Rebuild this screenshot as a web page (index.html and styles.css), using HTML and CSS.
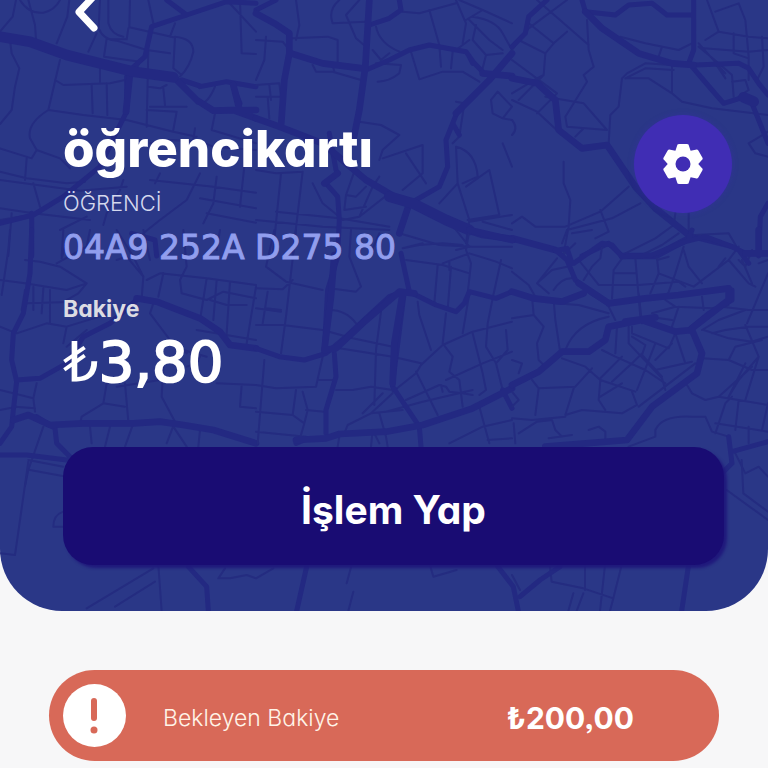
FILE: index.html
```html
<!DOCTYPE html>
<html lang="tr">
<head>
<meta charset="utf-8">
<meta name="viewport" content="width=device-width, initial-scale=1">
<title>öğrencikartı</title>
<link rel="stylesheet" href="styles.css">
</head>
<body>
<header class="card">
  <svg class="map" viewBox="0 0 768 611" preserveAspectRatio="xMidYMin slice" aria-hidden="true">
    <!-- North west -->
    <g transform="scale(.33333)">
      <path class="street" d="M48 0L38 50L0 95M85 0L105 75L108 118M60 0Q85 42 130 38Q165 30 180 0M208 0L202 50L170 130M300 0L296 85Q310 120 350 122L440 150L510 160M325 0L325 70Q335 105 370 110M390 0L388 82L520 112M320 115L312 170L420 185M290 100L265 155M385 85L380 118L330 118M445 0L460 70M525 110L520 205L545 225M525 110Q580 115 580 155Q570 200 540 230M445 150L440 380M420 185L410 205M720 0L725 160L768 162M680 0L768 95M30 120L35 160L58 205L45 260L35 330L0 372M180 180L145 330L250 345L380 360L520 395L590 410M165 240L190 255L330 250L375 240M300 190L300 245M275 255L278 340M320 250L322 345M145 330Q80 370 90 415L110 450L95 475L0 445M110 450L180 475L210 505M80 475L75 540M0 515L80 535L200 550L255 545M0 540L240 572L380 560M0 625L100 640L270 660M0 660L90 645M35 640L25 768M100 550L120 620M370 540L360 570L320 640L310 675M480 520L465 550M450 430L510 420L600 425L640 440L768 450M450 320L520 320L560 320M490 265L495 315M445 260L480 265L500 255M440 330L530 335M530 335L520 390M590 310Q620 320 645 260M645 340L635 390L768 430M585 385L580 420M600 520L560 600L480 660L430 700M650 530L640 610L610 670M450 540L640 560L768 578M600 595L768 625M620 640L768 668M735 480L720 620M180 690L260 650M185 768L190 690M510 110L525 70"/>
      <path class="road" d="M470 768L465 720L395 700M390 210L435 170L455 80L560 45L680 5L768 10M500 0L560 45M380 230L380 335L350 395M0 670L100 645L190 590L300 500L350 395M95 640L95 768M600 260L680 245L768 260M700 260L720 310M545 240L600 258"/>
      <path class="avenue" d="M390 220L378 335M650 332L768 330M700 255L720 335M520 230L590 300L640 332L700 330L768 355"/>
      <path class="highway" d="M0 110L90 125L200 165L300 190L400 215L520 232"/>
    </g>
    <!-- North -->
    <g transform="translate(256 0) scale(.33333)">
      <path class="street" d="M120 0L130 75L120 120M250 0Q215 30 230 70L330 65M310 0L270 45L300 115L330 140M105 115L215 110L245 120L245 190M30 110L25 180L0 240M0 120L80 125L100 150M170 195L180 215L230 215L315 240M230 195L235 215M350 150L375 180L400 160M360 80Q370 130 430 155M360 190L435 195L430 220Q400 245 365 245M440 35L490 40L600 10M520 30L550 135L555 200M465 155L490 238L560 215L620 215L670 245M590 155L585 205M600 0L630 70L620 130M640 60L700 120L740 150M650 50Q720 60 740 100L768 150M660 75L650 120L690 165L680 205M640 120L600 150M690 165L740 160M610 0L680 30L768 70M680 30L630 60M0 255L70 250L75 290L0 290M35 290L40 355M40 255L45 300M310 365L375 375L430 405L380 450L370 480M380 475L500 435L500 520L440 570M450 460L510 550M300 500L270 585L300 590L330 560M370 530L350 560L310 650L260 660M400 580L310 650M600 305L625 310L610 410L590 430M600 440Q660 455 665 530L620 550M630 560L700 510L730 645L635 660M600 440L605 550L550 610M605 550L640 660L630 730M740 430L768 500M705 300L725 275L768 320L740 355L710 340ZM740 355L768 360M0 510L60 520L140 515M75 520L50 768M140 515L110 768M170 550L200 610L250 650M270 585L265 630L330 620M60 635L250 655L400 680M0 660L200 680L400 690M640 665L768 645M680 665L768 690M430 700L550 735L650 740L768 740M370 700L340 768"/>
      <path class="road" d="M340 75L400 55L435 30L430 0M330 210L400 180L460 150L520 135L630 155L655 190L680 215M600 345L570 420L575 500L550 560L480 600M220 400L240 510M210 550L245 590L250 660L245 768M590 370L610 405M0 30L60 0M650 190L640 170"/>
      <path class="avenue" d="M0 40L55 70L100 100L100 160L85 240L75 380M105 160L200 190L320 205M340 0L328 200L310 330L290 430M430 700L460 610M768 160L700 240L600 340M0 355L70 380L200 430L330 540L450 610M205 550L245 520M680 220L768 228M600 680L680 705L775 718"/>
      <path class="highway" d="M400 590L470 610L570 660L640 690"/>
    </g>
    <!-- North east -->
    <g transform="translate(512 0) scale(.33333)">
      <path class="street" d="M75 0L230 135M165 0L50 85L0 150M50 70L125 130L165 95M125 130L100 160L95 225L20 300M20 120L100 160M0 180L135 280L75 340M0 280L75 235L95 225M75 240L105 285M225 60L230 150L245 200L215 225L225 245L160 350L165 380L285 390L215 310L100 290M0 300L75 335L150 405M190 410L215 385M330 235L345 220L400 190L480 195M330 235L320 320L295 345L290 430M340 235L400 205L485 210M345 235L410 235L480 280L510 305L600 325L768 345M480 195L480 280M325 110L400 130L500 150L540 130M450 140L440 170M585 0L620 95L580 120M610 35L680 10L700 60L710 170L710 240M620 95L710 110L768 115M665 100L665 160L710 175M575 145L710 155L768 150M750 110L755 200L735 240M560 140L620 190L660 225L665 290M610 190L640 235L620 200M660 245L700 240L710 270M710 270L680 290M768 395L710 430L730 460L768 470M155 485L155 550L175 600L170 680L155 760M0 670L30 650L70 680L160 680L265 635L350 560M265 630L290 695L250 715M165 690L300 655L385 610M490 640L485 675L430 715L340 760M530 640L530 700M0 360Q20 385 0 405M550 705L650 700L690 768M150 768L190 730M560 130L640 220"/>
      <path class="road" d="M0 140L40 100L50 50L105 0M210 0L220 35L310 45L350 15L420 10L465 45L545 45M545 0L545 150L530 190M540 200L600 270L635 310L700 290M550 195L680 190L710 205L740 250L768 285M720 310L768 430M768 610L745 650L740 768M210 768L290 730L330 768M540 710L660 740"/>
      <path class="avenue" d="M0 235L75 250L130 300L140 390L210 445L285 435L370 560L430 625L530 705M220 35L270 85L380 160L480 190L545 195M0 715L130 750M330 768L430 768L540 710"/>
      <path class="highway" d="M695 292L725 305"/>
    </g>
    <!-- West -->
    <g transform="translate(0 230) scale(.33333)">
      <path class="street" d="M30 0L25 60L5 195M0 150L75 160L200 180L260 160L180 110L120 95L75 90M185 85L200 30M260 160L235 190L200 210M75 180L65 240M100 170L100 240M130 175L125 250M150 180L150 240M80 220L230 215M0 290L50 310L140 280L200 290L330 250M200 290L190 340M260 300L200 350M400 80L430 140L425 205M440 150L480 130L620 145L768 165M490 130L475 200M430 140L380 80L350 90M540 150L545 190L620 210L670 185L768 205M620 145L600 270M650 150L640 270M690 155L680 310M768 170L740 340M630 210L680 225L740 225M460 220L450 250L510 330L560 370M590 300L768 330M600 380L590 400L560 410M550 360L620 380M0 480L100 505L110 460M100 505L105 545M45 530L105 535M320 460L310 520L245 560L240 580M375 460L385 575M310 520L375 530M490 410L485 500L525 575L500 640M270 590L275 640M330 590L315 650M400 580L375 650M600 600L595 650M520 590L560 650M650 460L768 465M725 465L720 530L768 535M130 590L85 720L75 768M85 690L190 710M90 720L200 740M350 470L480 450M150 280L150 230M0 540L50 530M550 0L560 110L540 150M660 0L650 60M430 0L450 90M350 0L400 80M270 0L260 50L170 100"/>
      <path class="road" d="M95 0L90 130L70 250L40 310L35 390L50 455L40 540L35 590L0 640M50 450L120 445L200 400L250 320L330 280L410 210M110 560L165 595L170 640L210 680M0 675L80 675L200 690"/>
      <path class="avenue" d="M410 205L470 215L600 265L660 305L690 345L768 355M40 570L85 555L150 585L250 580L400 580L480 575L550 585L640 600L768 640"/>
    </g>
    <!-- Centre -->
    <g transform="translate(256 230) scale(.33333)">
      <path class="street" d="M120 0L90 260L75 370M55 0L30 110L90 155L200 180M0 175L80 178L110 150M285 0L280 80L315 170L300 185L220 175M35 185L20 280M0 235L75 245M0 285L80 285L200 300L290 325L410 350M75 240L30 235M220 240Q270 240 300 280M375 245L360 360L355 525M250 355L410 380L495 400M200 380L180 470L60 475L0 465M190 450L230 450M25 390L5 640M120 480L110 555L145 580L135 615M140 485L155 540L145 580M150 540L205 545M0 545L110 555M0 605L150 620M240 480L290 480L345 470L410 480M410 490L345 550L275 585L265 610M390 545L500 515L650 480M370 550L390 620L395 650M345 550L440 540M495 405L560 345L650 305L768 275M480 425L545 555M410 485L480 430L495 405M485 215L490 255L525 360M570 250L560 340L590 380L580 425L610 450L620 530M640 190L620 310M710 205L695 280L690 350L720 400L740 480M650 310L680 430L690 480L670 495M570 450L680 400L768 365M450 510L550 465L570 470L580 485L620 490L650 495M555 465L560 485M500 40L440 55M440 55L490 45L560 40L620 45M450 90L560 105L640 130M545 105L535 220M585 110L575 240M560 100L640 70L720 95L768 115M640 0L630 60L645 100L635 190M735 90L710 205M600 0L640 50L600 60M580 95L580 120M580 640L680 590L768 570M670 530L700 640M695 630L768 625M370 640L350 600L345 650M250 620L245 650M320 550L380 490M750 300L755 360L720 400"/>
      <path class="road" d="M245 80L215 180L205 360M0 355L70 380L145 390L210 370L270 320L400 200L440 185M435 70L460 185M460 185L540 225L600 245L625 220L640 185L720 205L768 185M235 370L240 440L210 540L210 610M445 185L410 460M410 470L450 530L490 590L495 650M740 480L768 535M120 640L145 630"/>
      <path class="avenue" d="M235 75L225 200L205 360L240 355L320 280L430 185L475 190M440 190L415 340L410 460M120 630L210 625L250 612L390 605L500 585L650 535L768 475M640 0L768 30"/>
    </g>
    <!-- East -->
    <g transform="translate(512 230) scale(.33333)">
      <path class="street" d="M0 125L50 165L70 200M75 160L135 85M75 160L110 190M80 155L120 120L165 110M125 180Q150 140 185 145M200 90L260 165L380 165L500 155L520 170M270 50L265 85L240 110L215 150M300 205L305 120L330 85M305 130L370 130M370 85L385 260M435 85L440 130L415 190M515 50L490 130L465 200M440 130L545 170L650 90L680 50M470 80L435 90M515 60L530 110L570 160M380 80L450 45L500 10M650 90L710 160L730 170M620 110L640 85M690 90L720 160M740 100L768 90M630 230L710 240L768 240M768 130L705 280M720 60L700 110L680 90M0 265L65 255L60 200M65 255L95 290L75 340L80 390L100 410M125 210L130 270L145 370M130 220L200 225L290 250M160 360Q190 280 290 260M290 230L310 270M380 190L390 280M460 210L490 230L600 235L650 225M420 250L490 230M500 230L480 290M410 260L480 270M570 200L575 240M360 290L360 310L470 355L490 310M315 290L310 370M350 290L350 340L450 445L460 480M360 320L400 345L390 375L450 440M375 480L430 340M270 360L310 380L400 420L460 460M265 445L330 380M300 455L360 400L390 370M430 420L540 395M380 530L550 400M430 390L480 340M490 310L520 400M150 385L220 410L265 450L260 510L280 540M240 415L190 470L80 475L70 555M185 475L160 555L210 540L330 550L375 525L360 485M265 500L330 460M265 450L370 485M60 450L80 475M0 390L30 400L20 430M0 485L20 510L0 530M0 565L60 570L160 560M20 610L75 575L120 570L130 600L150 620M230 600L260 590L280 605L280 630M5 580L10 640M110 625L180 615M350 650L430 620L430 600Q450 555 540 560L580 560L600 605L650 620M525 465L540 490L580 510L620 500L768 525M570 385L650 390L720 420L768 420M575 300L650 325L720 335L768 320M570 300L620 270L700 240M600 310L640 300L710 290L768 290M650 390L670 350L750 330M700 285L740 380L700 510M740 380L680 450L650 500M720 410L620 500M700 400L650 500M610 610L640 520L660 500M680 510L670 600M610 580L768 605M768 520L750 600M710 590L710 640M670 670L700 730L740 710L768 740M240 0L180 10M165 0L150 40"/>
      <path class="road" d="M130 60L165 90L185 100L270 40L300 45L330 80L420 75L520 35L580 20L660 50L700 70L768 70M165 90L190 150L240 190L290 220M180 100L165 55L140 60M740 0L740 60M540 0L530 25M680 60L710 100M660 180L660 210L590 250L530 300M650 620L660 700L630 730M660 665L768 635"/>
      <path class="avenue" d="M0 185L65 205L150 215L215 190M290 220L400 205L500 195L650 175M200 160L290 220M0 465L80 425L150 365L230 365L280 330L290 290L390 270L490 305L540 300M540 300L570 370L555 430L420 530L345 630L100 650M650 180L650 210L540 295M740 0L740 65M700 70L768 70M340 275L430 262"/>
    </g>
    <!-- South -->
    <g transform="translate(0 440) scale(.33333)">
      <path class="street" d="M85 65L45 345L0 340M190 215Q160 225 160 260L190 260M460 385L260 505M475 375L485 513M465 425L345 500M675 385L655 415L690 415L740 405L768 415L820 385M1055 375L1040 430M1060 455L1045 513M1290 375L1300 410L1370 390M1536 405L1560 450M1650 380L1655 425L1750 445L1840 475M1755 375L1755 450M1815 375L1800 513M1865 375L1840 475L1830 513M1720 460L1705 513M1750 460L1730 513M2180 150L2304 240M2225 60L2230 160L2304 215"/>
      <path class="road" d="M565 380L620 440L625 513M920 380L890 513M1490 375L1540 440L1555 513M1560 470L1620 420L1680 380M2065 380L2045 513"/>
    </g>
  </svg>

  <button class="back" type="button" aria-label="Geri">
    <svg viewBox="0 0 24 32" aria-hidden="true"><path d="M20-4L5 12L20 28"/></svg>
  </button>

  <div class="heading">
    <div>
      <h1 class="title">öğrencikartı</h1>
      <p class="type">ÖĞRENCİ</p>
    </div>
    <button class="settings" type="button" aria-label="Ayarlar">
      <svg viewBox="-20 -20 40 40" aria-hidden="true">
        <circle r="15"/>
        <path id="tooth" d="M-8-12L-6-18Q-6-20-4-20H4Q6-20 6-18L8-12V0H-8Z"/>
        <use href="#tooth" transform="rotate(60)"/>
        <use href="#tooth" transform="rotate(120)"/>
        <use href="#tooth" transform="rotate(180)"/>
        <use href="#tooth" transform="rotate(240)"/>
        <use href="#tooth" transform="rotate(300)"/>
        <circle class="hub" r="7.500"/>
      </svg>
    </button>
  </div>

  <p class="number">04A9 252A D275 80</p>
  <p class="label">Bakiye</p>
  <p class="balance"><span class="lira">₺</span>3,80</p>
  <button class="action" type="button">İşlem Yap</button>
</header>

<main>
  <a class="pending" href="#">
    <svg class="alert" viewBox="0 0 63 63" aria-hidden="true"><circle cx="31.500" cy="31.500" r="31.500"/><path d="M31 17V34"/><circle class="dot" cx="31" cy="46" r="3.500"/></svg>
    <span class="pending-label">Bekleyen Bakiye</span>
    <strong class="amount">₺200,00</strong>
  </a>
</main>
</body>
</html>
```

FILE: styles.css
```css
* {
  box-sizing: border-box;
}

body {
  margin: 0;
  background: #f7f7f8;
  color: #fff;
  font-family: Inter, "Open Sans", sans-serif;
  font-feature-settings: "cv11", "ss03";
}

h1,
p {
  margin: 0;
}

button {
  border: 0;
  padding: 0;
  color: inherit;
  font: inherit;
  font-feature-settings: inherit;
  cursor: pointer;
}

.card {
  position: relative;
  display: flex;
  flex-direction: column;
  align-items: flex-start;
  overflow: hidden;
  padding: 0 36px 46px 63px;
  border-radius: 0 0 62px 62px;
  background: #2a3787;
}

.card > :not(.map) {
  position: relative;
}

.map {
  position: absolute;
  inset: 0;
  width: 100%;
  height: 100%;
  fill: none;
  stroke: #232982;
  stroke-linecap: round;
  stroke-linejoin: round;
}

.street {
  stroke: #242c80;
  stroke-width: 6px;
}

.road {
  stroke-width: 15px;
}

.avenue {
  stroke-width: 20px;
}

.highway {
  stroke-width: 32px;
}

.back {
  width: 24px;
  height: 32px;
  margin-left: 11px;
  background: none;
}

.back svg {
  display: block;
  width: 24px;
  height: 32px;
  fill: none;
  stroke: #fff;
  stroke-width: 7px;
  stroke-linecap: round;
  stroke-linejoin: round;
}

.heading {
  display: flex;
  align-items: flex-start;
  justify-content: space-between;
  align-self: stretch;
  margin-top: 83px;
}

.title {
  font-size: 51px;
  font-weight: 800;
  line-height: 68px;
}

.type {
  margin-top: 4px;
  color: #d5d9ee;
  font-size: 22px;
  font-weight: 300;
  line-height: 32px;
}

.settings {
  display: grid;
  place-items: center;
  width: 98px;
  height: 98px;
  border-radius: 50%;
  background: #402db4;
  box-shadow: 0 0 6px #402db455;
}

.settings svg {
  width: 40px;
  height: 40px;
  fill: #fff;
}

.settings .hub {
  fill: #402db4;
}

.number {
  margin-top: 9px;
  color: #919eee;
  font-family: "DejaVu Sans", sans-serif;
  font-size: 33px;
  line-height: 40px;
  -webkit-text-stroke: 1px #919eee;
}

.label {
  margin-top: 27px;
  color: #dcdce3;
  font-size: 23px;
  font-weight: 700;
  line-height: 28px;
}

.balance {
  margin-top: 7px;
  font-family: "DejaVu Sans", sans-serif;
  font-size: 56px;
  line-height: 64px;
  -webkit-text-stroke: 2px #fff;
}

.lira {
  -webkit-text-stroke: 0;
}

.action {
  align-self: stretch;
  height: 118px;
  margin: 53px 8px 0 0;
  padding-top: 6px;
  border-radius: 30px;
  background: #190c73;
  box-shadow: 3px 3px 3px #20197c;
  font-size: 39px;
  font-weight: 700;
}

main {
  padding: 59px 49px 7px;
}

.pending {
  display: flex;
  align-items: center;
  height: 91px;
  padding: 0 85px 0 14px;
  border-radius: 46px;
  background: #d86958;
  color: #fff4e8;
  text-decoration: none;
}

.alert {
  width: 63px;
  height: 63px;
  margin-right: 37px;
  fill: #fff;
  stroke: #d86958;
  stroke-width: 6px;
  stroke-linecap: round;
}

.alert circle {
  stroke: none;
}

.alert .dot {
  fill: #d86958;
}

.pending-label,
.amount {
  padding-top: 4px;
}

.pending-label {
  font-size: 23px;
  font-weight: 300;
}

.amount {
  margin-left: auto;
  color: #fff;
  font-size: 30px;
  font-weight: 700;
}
```
